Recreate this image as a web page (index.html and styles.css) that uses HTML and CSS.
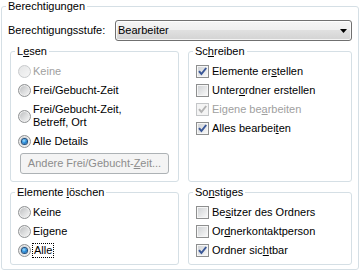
FILE: index.html
```html
<!DOCTYPE html>
<html lang="de">
<head>
  <meta charset="UTF-8">
  <title>Berechtigungen</title>
  <link rel="stylesheet" href="styles.css">
</head>
<body>
  <fieldset class="group group-main">
    <legend>Berechtigungen</legend>
    <div class="main-body">
      <div class="level-row">
        <label class="level-label">Berechtigungsstufe:</label>
        <div class="combo">
          <span>Bearbeiter</span>
          <svg class="combo-arrow" width="7" height="4" viewBox="0 0 7 4">
            <path d="M0 0h7L3.5 4z"></path>
          </svg>
        </div>
      </div>

      <div class="group-grid">
        <fieldset class="group">
          <legend>L<u>e</u>sen</legend>
          <div class="opts">
            <div class="opt disabled"><span class="radio"></span>Keine</div>
            <div class="opt"><span class="radio"></span>Frei/Gebucht-Zeit</div>
            <div class="opt"><span class="radio"></span><span>Frei/Gebucht-Zeit,<br>Betreff, Ort</span></div>
            <div class="opt"><span class="radio on"></span>Alle Details</div>
            <button class="btn" disabled>Andere Frei/Gebucht-<u>Z</u>eit...</button>
          </div>
        </fieldset>

        <fieldset class="group">
          <legend>Sc<u>h</u>reiben</legend>
          <div class="opts">
            <div class="opt"><span class="check on"><svg width="11" height="11" viewBox="0 0 11 11"><path d="M2 5.2l2.4 2.8L9.2 2"></path></svg></span>Elemente er<u>s</u>tellen</div>
            <div class="opt"><span class="check"></span>Unter<u>o</u>rdner erstellen</div>
            <div class="opt disabled"><span class="check on"><svg width="11" height="11" viewBox="0 0 11 11"><path d="M2 5.2l2.4 2.8L9.2 2"></path></svg></span>Eigene be<u>a</u>rbeiten</div>
            <div class="opt"><span class="check on"><svg width="11" height="11" viewBox="0 0 11 11"><path d="M2 5.2l2.4 2.8L9.2 2"></path></svg></span>Alles bearbei<u>t</u>en</div>
          </div>
        </fieldset>

        <fieldset class="group">
          <legend>Elemente <u>l</u>öschen</legend>
          <div class="opts">
            <div class="opt"><span class="radio"></span>Keine</div>
            <div class="opt"><span class="radio"></span>Eigene</div>
            <div class="opt"><span class="radio on"></span><span class="focus">Alle</span></div>
          </div>
        </fieldset>

        <fieldset class="group">
          <legend>So<u>n</u>stiges</legend>
          <div class="opts">
            <div class="opt"><span class="check"></span>Be<u>s</u>itzer des Ordners</div>
            <div class="opt"><span class="check"></span>Or<u>d</u>nerkontaktperson</div>
            <div class="opt"><span class="check on"><svg width="11" height="11" viewBox="0 0 11 11"><path d="M2 5.2l2.4 2.8L9.2 2"></path></svg></span>Ordner sic<u>h</u>tbar</div>
          </div>
        </fieldset>
      </div>
    </div>
  </fieldset>
</body>
</html>
```

FILE: styles.css
```css
* {
  box-sizing: border-box;
}
body {
  margin: 0;
  background-color: #fff;
  color: #000;
  font-family: "Liberation Sans", Arial, sans-serif;
  font-size: 11px;
  line-height: 13px;
}
.group {
  border: 1px solid #d5dfe5;
  border-radius: 3px;
  margin: 0;
  padding: 0;
  min-width: 0;
}
.group legend {
  margin-left: 4px;
  padding: 0 2px;
  line-height: 13px;
}
.group-main {
  margin: 0 2px 0 1px;
}
.main-body {
  padding: 7px 6px 4px 6px;
}
.level-row {
  display: flex;
  align-items: center;
  height: 21px;
}
.level-label {
  width: 107px;
  flex: none;
}
.combo {
  flex: 1;
  height: 21px;
  display: flex;
  align-items: center;
  justify-content: space-between;
  padding: 0 4px 0 2px;
  border: 1px solid #707070;
  border-radius: 3px;
  background: linear-gradient(#f5f5f5 0%, #eeeeee 50%, #e0e0e0 50%, #d3d3d3 100%);
  box-shadow: inset 0 0 0 1px rgba(255, 255, 255, 0.75);
}
.combo-arrow {
  fill: #000;
}
.group-grid {
  display: grid;
  grid-template-columns: 169px 164px;
  column-gap: 9px;
  row-gap: 4px;
  margin: 4px 0 0 2px;
}
.opts {
  display: flex;
  flex-direction: column;
  align-items: flex-start;
  padding: 7px 7px 7px 7px;
}
.opt {
  display: flex;
  align-items: center;
}
.opt + .opt {
  margin-top: 6px;
}
.opt.disabled {
  color: #a0a0a0;
}
.radio {
  flex: none;
  position: relative;
  width: 13px;
  height: 13px;
  margin-right: 2px;
  border: 1px solid #909294;
  border-radius: 50%;
  background: linear-gradient(135deg, #b8babc 0%, #dadbdc 50%, #f8f8f8 100%);
  box-shadow: inset 0 0 0 1px #eeeeee;
}
.opt.disabled .radio {
  border-color: #c8cacc;
  background: linear-gradient(135deg, #e4e5e6 0%, #f6f6f6 100%);
  box-shadow: none;
}
.radio.on::after {
  content: "";
  position: absolute;
  left: 3px;
  top: 3px;
  width: 5px;
  height: 5px;
  border-radius: 50%;
  background: radial-gradient(circle at 40% 35%, #a6e4ff 0%, #2f93e0 45%, #0b4f93 100%);
  box-shadow: 0 0 0 1px #1f4f7f;
}
.check {
  flex: none;
  width: 13px;
  height: 13px;
  margin-right: 3px;
  padding: 0;
  border: 1px solid #8e8f8f;
  background: linear-gradient(135deg, #cdd0d3 0%, #e6e7e8 55%, #fcfcfc 100%);
  box-shadow: inset 0 0 0 1px #f6f6f6;
  display: flex;
}
.check svg path {
  fill: none;
  stroke: #3a5797;
  stroke-width: 2;
}
.opt.disabled .check {
  border-color: #c4c6c8;
  background: #f4f4f4;
  box-shadow: none;
}
.opt.disabled .check svg path {
  stroke: #b3b3b3;
}
.focus {
  outline: 1px dotted #000;
  padding: 0 1px;
}
.btn {
  width: 149px;
  height: 21px;
  margin: 5px 0 0 2px;
  padding: 0;
  border: 1px solid #adb2b5;
  border-radius: 3px;
  background-color: #f4f4f4;
  color: #8d8d8d;
  font: inherit;
}
```
